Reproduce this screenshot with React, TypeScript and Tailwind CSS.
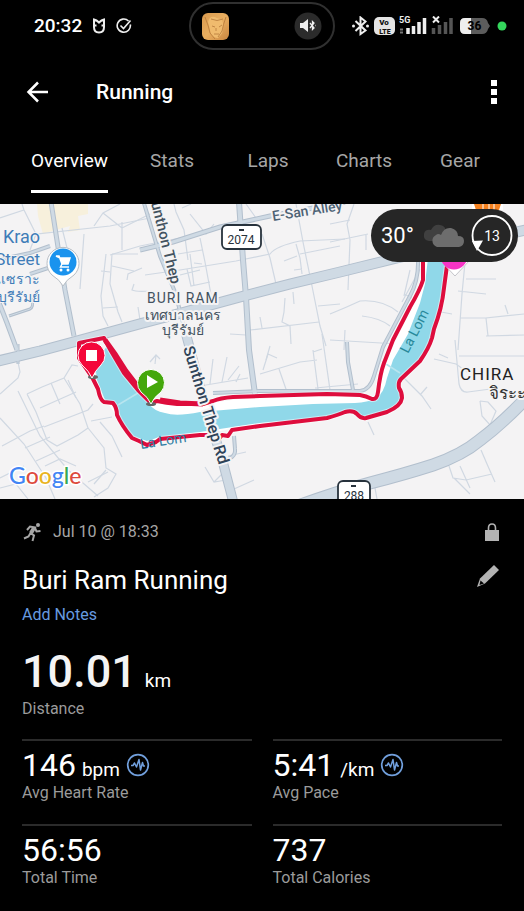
import React, { useState } from 'react';

interface Metric {
  value: string;
  unit?: string;
  label: string;
  chart?: boolean;
}

interface Road {
  d: string;
  width: number;
}

const tabs = ['Overview', 'Stats', 'Laps', 'Charts', 'Gear'];

const metrics: Metric[] = [
  { value: '146', unit: 'bpm', label: 'Avg Heart Rate', chart: true },
  { value: '5:41', unit: '/km', label: 'Avg Pace', chart: true },
  { value: '56:56', label: 'Total Time' },
  { value: '737', label: 'Total Calories' },
];

const roads: Road[] = [
  { d: 'M51-2 58 43 65 86 74 132', width: 4 },
  { d: 'M-2 96 7 119 17 146', width: 4 },
  { d: 'M140 46 173 38 220 23 270 12 345-2', width: 4 },
  { d: 'M239-2 243 56 246 93 249 146 255 190', width: 5 },
  { d: 'M186 130 206 205 222 255 233 297', width: 9 },
  { d: 'M143-4 160 52 175 88 186 130', width: 3 },
  { d: 'M-2 157 40 147 77 137 143 119 185 108 240 93 290 80 340 68 397 54 460 40 526 26', width: 10 },
  { d: 'M298 302Q333 289 370 279Q405 270 433 261Q462 251 480 236Q504 218 530 190', width: 12 },
  { d: 'M213 189 260 187 327 187 360 187Q370 186 374 172L383 143 410 92Q419 76 418 54', width: 3 },
  { d: 'M347 138 348 158 353 186', width: 3 },
  { d: 'M234 232 235 245Q236 255 222 256', width: 3 },
  { d: 'M18 140 18 160', width: 2 },
  { d: 'M2 55 30 49 50 42M30 70 48 64', width: 3 },
  { d: 'M9 112 30 105Q34 103 32 94', width: 2 },
];

const streets = [
  'M0 14 24 6 36 30 110 22 150 14M36 30 30 46M24 6 22 0M62 24 67 44 78 62M84 30 80 85',
  'M94 22 103 9 120 0M103 9 122 24M122 18 122 46M122 24 150 10M110 51 140 42 180 34',
  'M106 50 104 68 101 92 103 112 108 122M112 50 110 80 118 108 122 118M103 104 118 103M101 67 110 68M112 62 134 67',
  'M134 80 132 86Q136 88 150 87M112 50 138 50M127 76 128 70 142 64M138 103 140 116',
  'M174 0 176 8 184 26 188 56M182 4 191 0M190 10 206 30 214 20M200 34 205 58 212 96',
  'M145 71 180 66 236 57 270 50Q276 42 300 37L345 35M178 50 202 46M180 71 200 66M190 50 194 82M194 59 202 60M187 65 191 82 210 78',
  'M246 0 256 14M262 30 270 54 276 80M296 0 303 38 312 82 320 122 326 142M300 50 340 42M296 40 300 54 302 70M284 57 297 52M294 66 302 65',
  'M354 0 347 20 350 36 348 86M366 30 366 46M330 38 368 30M293 88 294 100M285 94 284 108 282 118 290 122 291 140M260 113 262 124M250 126 319 118M230 130 246 131M318 102 340 100',
  'M330 110Q345 104 360 97Q382 95 398 108M362 112Q380 114 390 122M330 136 398 140M345 126 344 146M410 66 404 92M404 90 412 94',
  'M466 48 462 90 458 146M466 75 496 75M458 87 486 90M441 108 452 110M460 114 488 114M488 132 486 114 524 110M486 132 524 131M505 101 508 110',
  'M263 166 268 150 277 154M260 170 300 158 317 156M313 148 322 145M322 130 330 186M313 146 315 162 318 185M279 165 287 188M315 184 358 180',
  'M382 157 405 175 422 192 431 205M420 191 427 183M434 155 456 160 470 170M455 136 459 180Q461 189 468 188L498 184M459 152 524 152M439 150 448 154',
  'M480 197 482 212 490 221 496 207 488 198 480 197M368 218 374 231M481 246 487 260 495 278M449 262 453 274 466 276 492 270M454 274 470 290M460 262 470 284',
  'M18 158 20 168 18 174 0 190M27 190 42 183 64 174 72 161 78 162M27 190 36 208 47 236 57 242 78 231 88 224 80 200 64 174',
  'M40 204 76 188M44 223 88 206 93 200M51 179 60 200M68 176 76 194M18 187 40 232 68 266 98 292M0 214 24 240 46 274 55 295',
  'M2 242 30 227 44 222M25 244 50 233M36 257 60 246M88 224 104 244 106 264 116 270 108 284 94 293M100 218 112 232 122 253M91 217 112 213M106 266 94 280',
  'M45 262 60 255 76 262M0 274 24 262M0 284 16 280 28 295M88 278 108 268M150 158 156 151 160 155M156 151 155 160M210 180 213 155M222 178 227 153M228 176 239 162',
  'M236 178 240 170M200 182 248 174M205 263 214 278 226 276M214 278 222 270M228 252 246 248M234 285 254 276M270 142 266 156M420 65 402 98M330 20 350 16M375 284 377 295',
];

const route =
  'M423 54 423 76Q420 86 410 103L393 136 384 159Q380 170 378 188Q377 196 372 195Q366 192 360 191L327 190 260 192 233 193Q220 194 213 197L203 200 177 200Q166 199 157 197L151 199 138 186 124 169 111 147 104 134 79 139 79 154 92 173 98 185Q100 196 104 198L113 199Q117 204 117 211Q122 222 132 234L139 237 147 241 156 238 160 235 200 231 210 231 218 236 222 231 228 232 232 226 260 222 327 214Q338 211 345 208Q353 206 357 210Q361 215 366 214L387 208Q401 202 402 194Q402 188 399 184Q398 178 401 175L420 157Q429 144 432 134L434 125Q442 104 444 84L448 54';

const StatusBar: React.FC = () => (
  <div className="grid h-[52px] grid-cols-[1fr_auto_1fr] items-center">
    <div className="flex items-center gap-[10px] pl-[34px]">
      <span className="text-[19px] leading-6 font-medium">20:32</span>
      <svg width="14" height="16" viewBox="0 0 14 16" fill="none" stroke="#eee" strokeWidth="2" aria-hidden="true">
        <path d="M4.500 7.500H2V1.500Q4.500 2 7 4.500Q9.500 2 12 1.500V7.500H9.500M2 7.500V9Q2 14.500 7 14.500Q12 14.500 12 9V7.500" />
      </svg>
      <svg width="16" height="16" viewBox="0 0 16 16" fill="none" stroke="#eee" strokeWidth="1.600" aria-hidden="true">
        <path d="M12.500 3A6.600 6.600 0 1 0 14.300 6.500M4.500 7.500 7.500 10.500 14.500 2.500" />
      </svg>
    </div>

    <div className="flex h-12 w-[146px] items-center justify-between rounded-full border-2 border-[#303030] pr-[11px] pl-[11px]">
      <svg width="27" height="27" viewBox="0 0 27 27" aria-hidden="true">
        <defs>
          <linearGradient id="gold" x1="0" y1="0" x2="1" y2="1">
            <stop offset="0" stopColor="#d99a4e" />
            <stop offset="0.5" stopColor="#e9ae60" />
            <stop offset="1" stopColor="#c98640" />
          </linearGradient>
        </defs>
        <rect width="27" height="27" rx="6" fill="url(#gold)" />
        <path d="M6 9Q8 1 15 5Q22 6 21 13Q22 20 16 25Q9 25 8 17Z" fill="#f0bb6e" />
        <path d="M3 4Q7 14 8 20L13 26M24 4Q21 12 20 18L16 24M10 13 13 14M17 14 20 12M14 15 14 18M12 21 17 21M9 6Q15 9 21 6" fill="none" stroke="#b5783a" strokeWidth="0.800" />
      </svg>
      <svg width="28" height="28" viewBox="0 0 28 28" aria-hidden="true">
        <circle cx="14" cy="14" r="13.500" fill="#2b2b2b" />
        <path d="M6 11H9L14 7V20L9 16H6Z" fill="#eee" />
        <path d="M16 11 20 16 18.500 17.500V9.500L20 11 16 16M21.500 13.500H22" fill="none" stroke="#eee" strokeWidth="1.300" />
      </svg>
    </div>

    <div className="flex items-center justify-end pr-[17px]">
      <svg width="155" height="20" viewBox="0 0 155 20" aria-label="Bluetooth, VoLTE, 5G, battery 36">
        <path d="M3.500 5 13.500 14.500 8.500 18V1.500L13.500 5.500 3.500 15" fill="none" stroke="#eee" strokeWidth="2" />
        <circle cx="1.500" cy="10" r="1.500" fill="#eee" />
        <circle cx="15.500" cy="10" r="1.500" fill="#eee" />
        <rect x="22" y="1" width="21" height="18" rx="5" fill="#e4e4e4" />
        <g fontFamily="Roboto, sans-serif" fontWeight="900">
          <text x="32" y="9" fontSize="8" textAnchor="middle" fill="#111">Vo</text>
          <text x="33" y="18" fontSize="7" textAnchor="middle" fill="#111">LTE</text>
          <text x="47" y="7" fontSize="9" fontWeight="700" fill="#eee">5G</text>
        </g>
        <path d="M56 12V18M61.500 10V18M67 6V18M72.500 2V18" stroke="#eee" strokeWidth="3.500" />
        <path d="M49.500 12.500V18" stroke="#777" strokeWidth="3" strokeDasharray="2 1" />
        <path d="M81.500 12V18M87.500 9V18M93.500 6V18M99 2V18" stroke="#555" strokeWidth="3.500" />
        <path d="M81 0.500 87 6.500M87 0.500 81 6.500" stroke="#eee" strokeWidth="2" />
        <path d="M113 2H130Q135 2 136 7L138 10 136 13Q135 18 130 18H113Q108 18 108 13V7Q108 2 113 2" fill="#5c5c5c" />
        <path d="M119 2H113Q108 2 108 7V13Q108 18 113 18H119Z" fill="#eee" />
        <text x="122.500" y="14" fontSize="12" fontWeight="700" fontFamily="Roboto, sans-serif" textAnchor="middle">36</text>
        <circle cx="150" cy="10" r="4.500" fill="#34d65c" />
      </svg>
    </div>
  </div>
);

const AppBar: React.FC = () => (
  <header className="flex h-20 items-center pr-[22px] pl-[26px]">
    <button type="button" aria-label="Back">
      <svg width="22" height="22" viewBox="0 0 22 22" fill="none" stroke="#fff" strokeWidth="2.500">
        <path d="M22 11H3M12 1.500 2.500 11 12 20.500" />
      </svg>
    </button>
    <h1 className="ml-12 text-[21px] leading-7 font-medium">Running</h1>
    <button type="button" aria-label="More options" className="ml-auto">
      <svg width="16" height="26" viewBox="0 0 16 26" fill="#fff">
        <path d="M5 1H11V7H5ZM5 10H11V16H5ZM5 19H11V25H5Z" />
      </svg>
    </button>
  </header>
);

const TabBar: React.FC = () => {
  const [active, setActive] = useState('Overview');

  return (
    <nav className="flex h-[72px] pl-[15px]">
      {tabs.map((tab) => (
        <button key={tab} type="button" onClick={() => setActive(tab)} className="flex min-w-24 justify-center px-4">
          <span
            className={`flex h-[61px] items-center border-b-3 text-[19px] leading-6 ${
              tab === active ? 'border-white text-white' : 'border-transparent text-[#a6a6a6]'
            }`}
          >
            {tab}
          </span>
        </button>
      ))}
    </nav>
  );
};

const WeatherPill: React.FC = () => (
  <div className="absolute top-[5px] right-[6px] flex h-[53px] w-[147px] items-center rounded-full bg-[#262626] pr-[5px] pl-[10px]">
    <span className="text-[22px] leading-7">30°</span>
    <svg className="ml-auto" width="42" height="26" viewBox="0 0 42 26" aria-label="Cloudy">
      <path d="M6 18Q0 17 1 11Q2 6 8 7Q11 1 17 2Q23 3 23 9L18 18Z" fill="#404040" />
      <path d="M14 24A6.500 6.500 0 0 1 13 12Q15 10 18 12Q21 4 28 5Q35 7 35 13Q41 13 41 18Q41 23 36 24Z" fill="#6d6d6d" />
    </svg>
    <svg className="ml-[5px]" width="43" height="43" viewBox="0 0 43 43" aria-label="Wind 13">
      <circle cx="22" cy="21.500" r="19.500" fill="none" stroke="#fff" strokeWidth="1.800" />
      <path d="M2 27 13 26.500 7 37Z" fill="#fff" />
      <text x="22" y="27" fontSize="14" textAnchor="middle" fill="#fff" fontFamily="Roboto, sans-serif">13</text>
    </svg>
  </div>
);

const RouteMap: React.FC = () => (
  <section className="relative h-[295px] overflow-hidden bg-[#f4f3f4]">
    <svg className="h-full w-full" viewBox="0 0 524 295" preserveAspectRatio="xMidYMid slice" fontFamily="Roboto, 'Noto Sans', sans-serif" aria-label="Route map">
      <path d="M37 0H88V10L78 12 80 26 68 28 70 22 52 27 43 30 38 12Z" fill="#f7f0dc" />
      {streets.map((d) => (
        <path key={d} d={d} fill="none" stroke="#d0d8e2" strokeWidth="1.200" />
      ))}
      {roads.map(({ d, width }) => (
        <path key={d} d={d} fill="none" stroke="#b2bfcd" strokeWidth={width + 1} />
      ))}
      {roads.map(({ d, width }) => (
        <path key={d} d={d} fill="none" stroke="#cfdae4" strokeWidth={width - 1} />
      ))}

      {/* river with its white bank, then the recorded track */}
      <path d="M425 54 423 76 410 103 393 136 384 159 378 190 372 194 360 191 260 192 203 200 157 197 138 186 111 147 106 145 95 166 107 198 130 232 150 239 260 220 327 213 350 208 363 214 387 208 401 196 398 179 432 136 447 54Z" fill="#fff" />
      <path d="M428 54 425 80 420 99 408 130 393 156 387 174Q384 190 375 195Q368 198 355 199L313 200 260 203 200 208Q176 213 165 209Q154 207 149 200L133 180 107 142 95 160 97 176 105 196 115 201 120 215 132 232 147 237 160 233 200 228 260 219 327 213 348 207 363 213 387 207 401 196 397 179 419 157 431 137 434 122 443 84 447 54Z" fill="#90d8e9" />
      <path d="M118 201 138 189M386 160 400 169" stroke="#b8e5ef" strokeWidth="1.500" />
      <path d={route} fill="none" stroke="#fff" strokeWidth="6" strokeLinejoin="round" opacity="0.500" />
      <path d={route} fill="none" stroke="#de0d3d" strokeWidth="4" strokeLinejoin="round" />
      <path d="M105 136 115 150 126 167 139 184M160 196 180 199 203 200" fill="none" stroke="#de0d3d" strokeWidth="5" />

      <g fill="#43525f" stroke="#f4f3f4" strokeWidth="4" paintOrder="stroke" strokeLinejoin="round">
        <text transform="translate(151 -1) rotate(76)" fontSize="15" fontWeight="500">unthon Thep</text>
        <text transform="translate(273 17) rotate(-9)" fontSize="14" fontWeight="500" fill="#4d6275">E-San Alley</text>
        <text transform="translate(183 144) rotate(73)" fontSize="16" fontWeight="500" fill="#2f4358">Sunthon Thep Rd</text>
        <text x="147" y="99" fontSize="14" letterSpacing="1">BURI RAM</text>
        <text x="183" y="116" fontSize="14" textAnchor="middle">เทศบาลนคร</text>
        <text x="183" y="131" fontSize="14" textAnchor="middle">บุรีรัมย์</text>
        <text x="460" y="176" fontSize="17" letterSpacing="1" fill="#222">CHIRA</text>
        <text x="489" y="195" fontSize="17" fill="#333">จิระะ</text>
      </g>
      <g fill="#3f7db8" stroke="#f4f3f4" strokeWidth="2" paintOrder="stroke" textAnchor="end">
        <text x="40" y="39" fontSize="18">Krao</text>
        <text x="40" y="61" fontSize="17">Street</text>
        <text x="40" y="80" fontSize="14">นเซราะ</text>
        <text x="40" y="98" fontSize="14">บุรีรัมย์</text>
      </g>
      <text transform="translate(408 150) rotate(-63)" fontSize="14" fill="#28899b">La Lom</text>
      <text transform="translate(141 245) rotate(-9)" fontSize="14" fill="#2f7da3">La Lom</text>

      <g fill="#fff" stroke="#27323c" strokeWidth="1.800">
        <rect x="222" y="21" width="39" height="24" rx="5" />
        <rect x="338" y="277" width="32" height="26" rx="5" />
      </g>
      <path d="M239 26H244M351 282H356" stroke="#27323c" strokeWidth="2" />
      <g fontSize="12" fill="#27323c" textAnchor="middle">
        <text x="241" y="40">2074</text>
        <text x="354" y="296">288</text>
      </g>

      {/* place pins */}
      <path d="M63 82Q60 76 52 71A16 16 0 1 1 74 71Q66 76 63 82Z" fill="#fff" stroke="#b8bec5" />
      <circle cx="63" cy="58" r="13.500" fill="#1a93ee" />
      <path d="M56 52H59L62 60H68L70 54H60Z" fill="#fff" stroke="#fff" strokeWidth="1.500" />
      <path d="M62 60 60.500 63H69" fill="none" stroke="#fff" strokeWidth="1.500" />
      <circle cx="61" cy="66" r="1.500" fill="#fff" />
      <circle cx="68" cy="66" r="1.500" fill="#fff" />
      <path d="M440 56 455 72 470 56Z" fill="#fff" stroke="#c5c5ca" />
      <circle cx="454" cy="52" r="13.500" fill="#f634c5" />
      <path d="M472 0H503V6H472Z" fill="#fff" />
      <path d="M474 0H501L499 6H476Z" fill="#f58220" />
      <path d="M483 0V6M489 0V6M494 0V6" stroke="#fff" />

      <ellipse cx="93" cy="173" rx="5" ry="2" fill="#666" />
      <path d="M92 174Q89 167 82 161A13.500 13.500 0 1 1 101 161Q95 167 92 174Z" fill="#f4073a" stroke="#fff" />
      <rect x="86" y="146" width="11" height="11" fill="#fff" />
      <ellipse cx="151" cy="200" rx="5" ry="2" fill="#666" />
      <path d="M151 200Q148 193 141 188A13.500 13.500 0 1 1 161 188Q154 193 151 200Z" fill="#44a70b" stroke="#fff" />
      <path d="M147 171V184L158 178Z" fill="#fff" />

      <text x="9" y="280" fontSize="23" fontFamily="Lato, sans-serif" fontWeight="500" stroke="#fff" strokeWidth="3" paintOrder="stroke">
        <tspan fill="#4285f4">G</tspan>
        <tspan fill="#dd4b3e">o</tspan>
        <tspan fill="#e9b41f">o</tspan>
        <tspan fill="#4285f4">g</tspan>
        <tspan fill="#37a853">l</tspan>
        <tspan fill="#dd4b3e">e</tspan>
      </text>
    </svg>
    <WeatherPill />
  </section>
);

const ChartBadge: React.FC = () => (
  <button type="button" aria-label="Show chart">
    <svg width="24" height="24" viewBox="0 0 24 24" fill="none" stroke="#719fdc">
      <circle cx="12" cy="12" r="10.300" strokeWidth="1.700" />
      <path d="M5 12.500H7L8.500 10 10.500 14 13 6.500 14.500 17 16.500 9.500 17.500 13H19" strokeWidth="1.500" strokeLinejoin="round" />
    </svg>
  </button>
);

const MetricCell: React.FC<{ metric: Metric }> = ({ metric }) => (
  <div className="h-[85px] border-t-2 border-[#2b2b2b] pt-[6px]">
    <div className="flex items-center">
      <p className="flex items-baseline gap-[6px]">
        <span className="text-[32px] leading-9">{metric.value}</span>
        {metric.unit && <span className="text-[19px] leading-6">{metric.unit}</span>}
      </p>
      {metric.chart && (
        <span className="ml-[6px] flex">
          <ChartBadge />
        </span>
      )}
    </div>
    <p className="text-[16px] leading-5 text-[#9b9b9b]">{metric.label}</p>
  </div>
);

const ActivitySummary: React.FC = () => (
  <main className="px-[22px] pt-[23px]">
    <div className="flex h-5 items-center text-[#a6a6a6]">
      <svg width="20" height="20" viewBox="0 0 20 20" fill="none" stroke="#a6a6a6" strokeWidth="2" aria-hidden="true">
        <circle cx="16" cy="3" r="2" fill="#a6a6a6" stroke="none" />
        <path d="M5 8 8 4.500 13 5.500 8.500 11 12 13.500 10.500 19M13 6 14.500 9.500 18.500 9M8.500 11 6.500 14.500 2 16.500" />
        <path d="M12 6 9 11" strokeWidth="4" />
      </svg>
      <span className="ml-[11px] text-[16px] leading-5">Jul 10 @ 18:33</span>
      <svg className="ml-auto mr-[3px]" width="14" height="18" viewBox="0 0 14 18" fill="#b3b3b3" aria-label="Private">
        <path d="M0 7H14V18H0Z" />
        <path d="M3.500 8V5Q3.500 1 7 1Q10.500 1 10.500 5V8" fill="none" stroke="#b3b3b3" strokeWidth="1.600" />
      </svg>
    </div>

    <div className="mt-5 flex h-9 items-center justify-between">
      <h2 className="text-[26px] leading-9">Buri Ram Running</h2>
      <button type="button" aria-label="Edit name" className="mr-[2px] self-start">
        <svg width="24" height="26" viewBox="0 0 24 26" fill="#b3b3b3">
          <path d="M1 25 4 16.500 18 3 23 8 9 21.500Z" />
          <path d="M4.500 18.500 8 21.500 3.500 23Z" fill="#000" />
        </svg>
      </button>
    </div>
    <a href="#notes" className="mt-[7px] block text-[16px] leading-5 text-[#679be0]">Add Notes</a>

    <p className="mt-5 flex items-baseline gap-2">
      <span className="text-[45px] leading-[54px] font-medium text-[#f4f4f4]">10.01</span>
      <span className="text-[19px] leading-6">km</span>
    </p>
    <p className="text-[16px] leading-5 text-[#9b9b9b]">Distance</p>

    <div className="mt-5 grid grid-cols-2 gap-x-[21px]">
      {metrics.map((metric) => (
        <MetricCell key={metric.label} metric={metric} />
      ))}
    </div>
  </main>
);

export default function App() {
  return (
    <div className="min-h-screen bg-black font-['Roboto',sans-serif] text-white">
      <StatusBar />
      <AppBar />
      <TabBar />
      <RouteMap />
      <ActivitySummary />
    </div>
  );
}
